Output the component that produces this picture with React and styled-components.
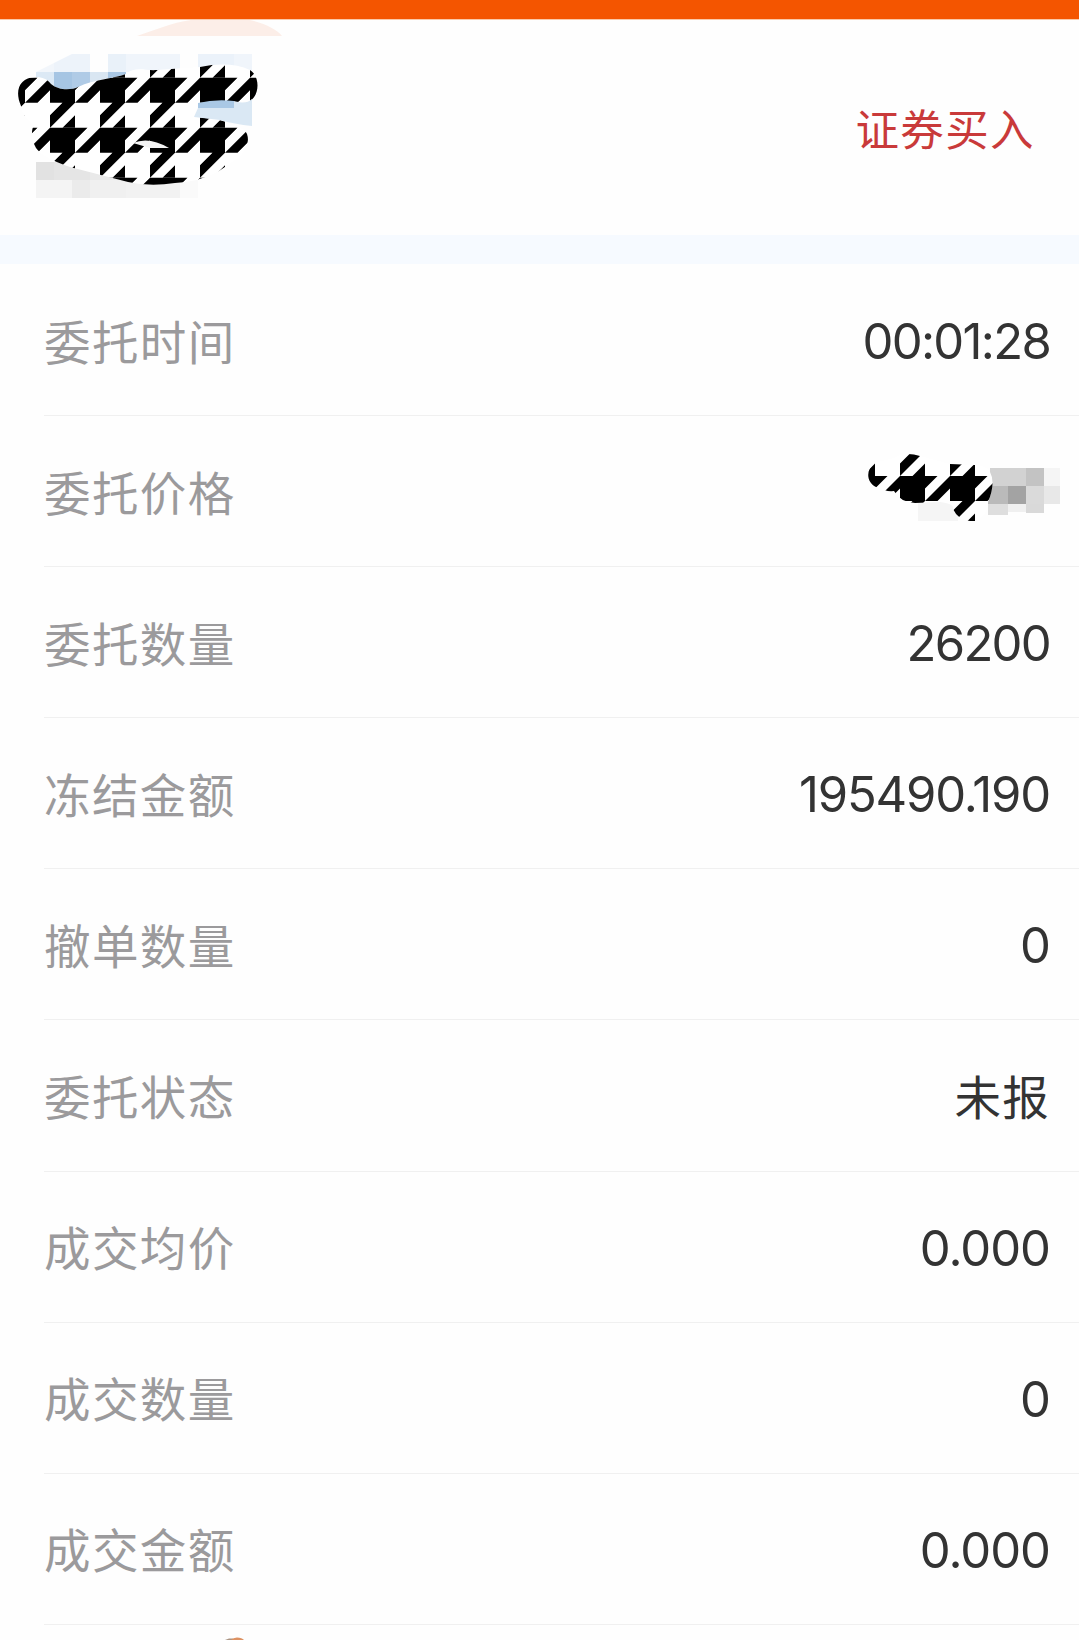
import styled, { createGlobalStyle } from 'styled-components';

const GlobalStyle = createGlobalStyle`
    body {
        margin: 0;
        background: #fefefe;
        font-family: Inter, 'Noto Sans CJK SC', sans-serif;
    }
`;

const Page = styled.div`
    display: flex;
    flex-direction: column;
    height: 1640px;
    overflow: hidden;
    background: #fefefe;
`;

const TopBar = styled.div`
    height: 20px;
    flex-shrink: 0;
    background: #f45500;
    border-bottom: 1px solid #fbc9a8;
    box-sizing: border-box;
`;

const Header = styled.header`
    display: flex;
    justify-content: space-between;
    align-items: flex-start;
    height: 215px;
    flex-shrink: 0;
`;

const Side = styled.div`
    margin: 75px 44px 0 0;
    font-size: 43.5px;
    line-height: 70px;
    letter-spacing: 1.4px;
    color: #c93a3a;
`;

const Divider = styled.div`
    height: 29px;
    flex-shrink: 0;
    background: #f6faff;
`;

const List = styled.div`
    display: flex;
    flex-direction: column;
    padding: 1px 0 0 44px;
`;

const Row = styled.div`
    display: flex;
    justify-content: space-between;
    align-items: center;
    box-sizing: border-box;
    height: 151.1px;
    flex-shrink: 0;
    padding-right: 30px;
    border-bottom: 1px solid #f0f0f0;
`;

const Label = styled.span`
    padding: 0 0 2px 0;
    font-size: 46.5px;
    letter-spacing: 1.4px;
    color: #9b9a9c;
`;

const Value = styled.span`
    padding-top: ${(p) => (p.$cjk ? '0' : '3px')};
    padding-bottom: ${(p) => (p.$cjk ? '2px' : '0')};
    margin-right: -1px;
    font-size: ${(p) => (p.$cjk ? '46.5px' : '49px')};
    letter-spacing: ${(p) => p.$spacing || '-1px'};
    color: #333;
`;

const Drawing = styled.svg`
    display: block;
    flex-shrink: 0;
    margin: ${(p) => p.$margin || '0'};
`;

const TOOTH = 'M0 0H37.5L25 12.5V25H0Z M50 0V12.5L37.5 25H25Z M12.5 25H25L0 50V37.5Z M25 37.5V50H12.5Z';

const Houndstooth = ({ x, y, cols, rows, clip }) => (
    <g clipPath={`url(#${clip})`}>
        <rect x={x} y={y} width={cols * 50} height={rows * 50} fill='#fff' />
        {Array.from({ length: cols * rows }, (_, i) => (
            <path
                key={i}
                d={TOOTH}
                transform={`translate(${x + (i % cols) * 50} ${y + Math.floor(i / cols) * 50})`}
            />
        ))}
    </g>
);

// x, y, width, height, fill
const nameBlocks = [
    [54, 54, 36, 18, '#edf3fa'],
    [36, 60, 18, 12, '#f2f6fb'],
    [108, 54, 18, 18, '#e9f1f9'],
    [126, 54, 54, 18, '#f0f5fb'],
    [198, 54, 36, 18, '#ebf2fa'],
    [234, 54, 18, 18, '#f0f5fb'],
    [36, 72, 18, 18, '#dce9f5'],
    [54, 72, 18, 18, '#a6c5e3'],
    [72, 72, 18, 18, '#b0cbe6'],
    [90, 72, 18, 18, '#d9e6f2'],
    [108, 72, 18, 18, '#a9c7e4'],
    [36, 162, 18, 18, '#e2e2e2'],
    [54, 162, 36, 18, '#e5e5e5'],
    [90, 162, 36, 18, '#e9e9e9'],
    [126, 162, 54, 18, '#f0f0f0'],
    [36, 180, 36, 18, '#f4f4f4'],
    [72, 180, 18, 18, '#ebebeb'],
    [90, 180, 36, 18, '#f0f0f0'],
    [126, 180, 54, 18, '#f2f2f2'],
    [180, 180, 18, 18, '#fafafa'],
];

const priceBlocks = [
    [990, 468, 36, 18, '#d2d2d2'],
    [1026, 468, 18, 18, '#c3c3c3'],
    [1044, 468, 16, 18, '#f5f5f5'],
    [988, 486, 20, 18, '#bababa'],
    [1008, 486, 18, 18, '#a3a3a3'],
    [1026, 486, 18, 18, '#dadada'],
    [1044, 486, 16, 18, '#e8e8e8'],
    [988, 504, 20, 11, '#dedede'],
    [1008, 504, 18, 8, '#f0f0f0'],
    [1026, 504, 18, 9, '#d9d9d9'],
];

const Blocks = ({ items }) =>
    items.map(([x, y, w, h, fill]) => (
        <rect key={`${x}-${y}`} x={x} y={y} width={w} height={h} fill={fill} />
    ));

const HiddenName = () => (
    <Drawing width='360' height='215' viewBox='0 20 360 215'>
        <clipPath id='blob-name'>
            <path d='M21 106C14 90 20 78 35 77C43 77 47 79 51 84C59 91 72 90 78 87C95 79 112 79 126 74C135 66 145 71 157 70L200 67Q230 61 250 70C260 76 260 95 250 101Q220 103 198 104L194 117L215 119Q244 126 247 134Q251 146 238 158L219 171Q199 182 175 183Q150 187 128 182L70 167Q43 158 36 148C31 139 31 130 34 125Q22 116 21 106Z' />
        </clipPath>
        <path d='M137 36C158 29 180 19 205 19H245C262 22 277 29 282 36Z' fill='#fceee8' />
        <Blocks items={nameBlocks} />
        <path d='M36 54H72L36 72Z' fill='#fefefe' />
        <Houndstooth x={0} y={27.7} cols={6} rows={4} clip='blob-name' />
        <path d='M198 103Q215 99 234 101V108H198Z' fill='#a9c8e5' />
        <path d='M234 101Q246 105 252 99V126Q234 124 220 120L194 117L198 108H234Z' fill='#dae8f4' />
        <path d='M133 143Q149 136 169 148L150 148Z' fill='#f3f3f3' />
    </Drawing>
);

const HiddenPrice = () => (
    <Drawing width='220' height='100' viewBox='859 441 220 100' $margin='0 -30px 0 0'>
        <clipPath id='blob-price'>
            <path d='M874 463C866 470 866 482 876 487Q886 492 894 491Q900 502 915 503L940 502Q955 504 953 509Q958 520 970 521H975Q988 516 988 502Q996 483 990 472Q986 465 975 465L950 464L920 456Q905 451 894 458Z' />
        </clipPath>
        <path d='M918 500H958V521H918Z' fill='#f5f5f5' />
        <Blocks items={priceBlocks} />
        <Houndstooth x={850} y={426} cols={3} rows={2} clip='blob-price' />
    </Drawing>
);

const BottomMark = () => (
    <Drawing width='30' height='8' viewBox='220 1632 30 8' $margin='7px 0 0 176px'>
        <path d='M225 1640L229 1638.5H233V1640Z' fill='#a99482' />
        <path d='M231 1640Q233 1637.5 237 1637.5Q242 1637.5 244 1640Z' fill='#dd9263' />
    </Drawing>
);

const rows = [
    { label: '委托时间', value: '00:01:28', spacing: '-1.7px' },
    { label: '委托价格', hidden: true },
    { label: '委托数量', value: '26200', spacing: '-1.7px' },
    { label: '冻结金额', value: '195490.190', spacing: '-1.2px' },
    { label: '撤单数量', value: '0' },
    { label: '委托状态', value: '未报', spacing: '1.2px', cjk: true },
    { label: '成交均价', value: '0.000' },
    { label: '成交数量', value: '0' },
    { label: '成交金额', value: '0.000' },
];

const App = () => (
    <>
        <GlobalStyle />
        <Page>
            <TopBar />
            <Header>
                <HiddenName />
                <Side>证券买入</Side>
            </Header>
            <Divider />
            <List>
                {rows.map(({ label, value, hidden, spacing, cjk }) => (
                    <Row key={label}>
                        <Label>{label}</Label>
                        {hidden ? (
                            <HiddenPrice />
                        ) : (
                            <Value $spacing={spacing} $cjk={cjk}>
                                {value}
                            </Value>
                        )}
                    </Row>
                ))}
                <BottomMark />
            </List>
        </Page>
    </>
);

export default App;
